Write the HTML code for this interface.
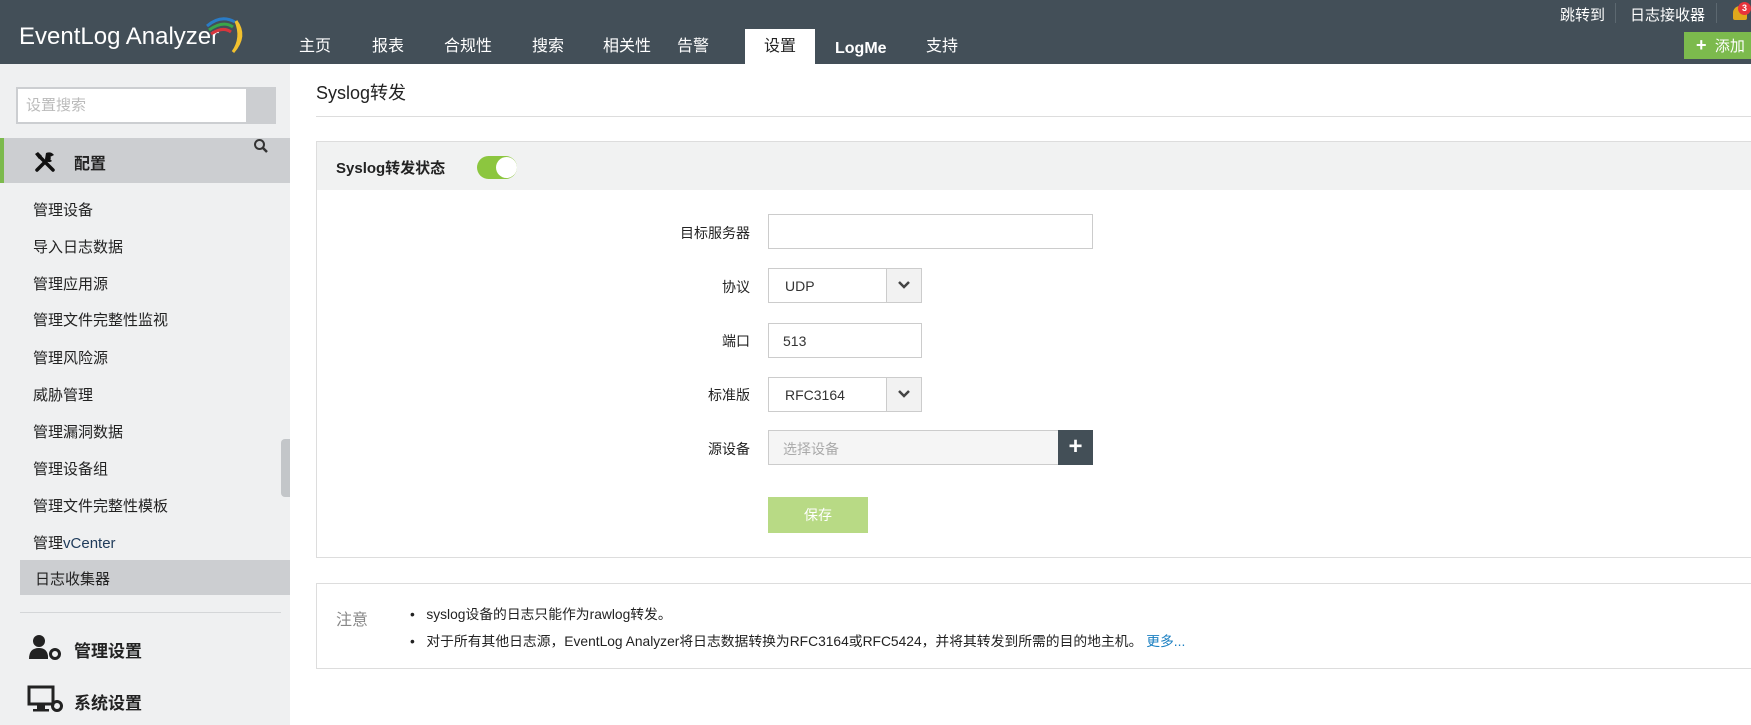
<!DOCTYPE html>
<html><head><meta charset="utf-8">
<style>
*{margin:0;padding:0;box-sizing:border-box}
body{width:1751px;height:725px;overflow:hidden;background:#fff;font-family:"Liberation Sans","Noto Sans CJK SC",sans-serif;color:#222;position:relative}
.a{position:absolute;white-space:nowrap}
#hd{left:0;top:0;width:1751px;height:64px;background:#434f58}
.nav{color:#fff;font-size:16px;top:36px;line-height:22px}
.sb{left:0;top:64px;width:290px;height:661px;background:#eff0f1}
.mi{font-size:15px;left:33px;color:#222}
.lbl{font-size:14px;right:1001px;text-align:right}
.inp{border:1px solid #ccc;background:#fff;font-size:14px;color:#333}
</style></head><body>
<div id="hd" class="a"></div>
<div class="a" style="left:19px;top:23px;color:#fff;font-size:24px;letter-spacing:0px">EventLog Analyzer</div>
<svg class="a" style="left:205px;top:12px" width="46" height="42" viewBox="0 0 46 42">
<path d="M2 14 Q16 2 30 10" stroke="#2a7cc7" stroke-width="3" fill="none"/>
<path d="M4 18 Q18 8 28 15" stroke="#3aa54a" stroke-width="3" fill="none"/>
<path d="M6 22 Q18 14 26 20" stroke="#d7363d" stroke-width="3" fill="none"/>
<path d="M31 9 Q42 24 28 40 Q38 26 31 9" stroke="#f2c12e" stroke-width="3" fill="#f2c12e"/>
</svg>
<div class="a" style="left:1560px;top:4px;color:#fff;font-size:15px">跳转到</div>
<div class="a" style="left:1615px;top:3px;width:1px;height:20px;background:#5c6870"></div>
<div class="a" style="left:1630px;top:4px;color:#fff;font-size:15px">日志接收器</div>
<div class="a" style="left:1716px;top:3px;width:1px;height:20px;background:#5c6870"></div>
<div class="a" style="left:1733px;top:6px;width:14px;height:14px;background:#e0a81c;border-radius:7px 7px 2px 2px"></div>
<div class="a" style="left:1738px;top:2px;width:13px;height:13px;background:#e8343c;border-radius:50%;color:#fff;font-size:9px;font-weight:bold;text-align:center;line-height:13px">3</div>
<div class="a" style="left:1684px;top:32px;width:67px;height:27px;background:#7cba4d;color:#fff;font-size:15px;line-height:27px;padding-left:12px"><b style="font-size:18px">+</b>&nbsp; 添加</div>
<div class="nav a" style="left:299px">主页</div>
<div class="nav a" style="left:372px">报表</div>
<div class="nav a" style="left:444px">合规性</div>
<div class="nav a" style="left:532px">搜索</div>
<div class="nav a" style="left:603px">相关性</div>
<div class="nav a" style="left:677px">告警</div>
<div class="a" style="left:745px;top:29px;width:70px;height:35px;background:#fff"></div>
<div class="nav a" style="left:764px;color:#222">设置</div>
<div class="nav a" style="left:835px;top:38px;font-weight:bold">LogMe</div>
<div class="nav a" style="left:926px">支持</div>

<div class="sb a"></div>
<div class="a" style="left:16px;top:87px;width:260px;height:37px;background:#ccced1"></div>
<div class="a" style="left:18px;top:89px;width:228px;height:33px;background:#fff;color:#bbb;font-size:15px;line-height:33px;padding-left:8px">设置搜索</div>
<div class="a" style="left:0;top:138px;width:290px;height:45px;background:#ccced1"></div>
<div class="a" style="left:0;top:138px;width:4px;height:45px;background:#7cba4d"></div>
<svg class="a" style="left:253px;top:138px" width="16" height="16" viewBox="0 0 16 16"><circle cx="6.5" cy="6.5" r="4.5" stroke="#333" stroke-width="2" fill="none"/><path d="M10 10l4 4" stroke="#333" stroke-width="2.5"/></svg>
<svg class="a" style="left:33px;top:150px" width="24" height="24" viewBox="0 0 24 24"><path d="M4 20L16 8" stroke="#111" stroke-width="3.5" stroke-linecap="round"/><path d="M13 3 Q18 1 21 5 L17 7 L17 9 L19 11 Q15 14 12 9Z" fill="#111"/><path d="M7 7L20 20" stroke="#111" stroke-width="3.5" stroke-linecap="round"/><path d="M2 4L5 2L9 6L6 9Z" fill="#111"/></svg>
<div class="a" style="left:74px;top:150px;font-size:16px;font-weight:bold">配置</div>
<div class="a mi" style="top:199px">管理设备</div>
<div class="a mi" style="top:236px">导入日志数据</div>
<div class="a mi" style="top:273px">管理应用源</div>
<div class="a mi" style="top:309px">管理文件完整性监视</div>
<div class="a mi" style="top:347px">管理风险源</div>
<div class="a mi" style="top:384px">威胁管理</div>
<div class="a mi" style="top:421px">管理漏洞数据</div>
<div class="a mi" style="top:458px">管理设备组</div>
<div class="a mi" style="top:495px">管理文件完整性模板</div>
<div class="a mi" style="top:532px">管理<span style="color:#1e3a5a">vCenter</span></div>
<div class="a" style="left:20px;top:560px;width:270px;height:35px;background:#ccced1"></div>
<div class="a mi" style="top:568px;left:35px">日志收集器</div>
<div class="a" style="left:20px;top:612px;width:261px;height:1px;background:#d4d6d8"></div>
<svg class="a" style="left:28px;top:634px" width="34" height="26" viewBox="0 0 34 26"><circle cx="11" cy="7" r="6" fill="#222"/><path d="M1 25 Q1 14 11 14 Q19 14 20 22 L20 25Z" fill="#222"/><circle cx="27" cy="20" r="4.5" stroke="#222" stroke-width="3" fill="none"/></svg>
<div class="a" style="left:74px;top:637px;font-size:17px;font-weight:bold">管理设置</div>
<svg class="a" style="left:27px;top:685px" width="36" height="28" viewBox="0 0 36 28"><rect x="2" y="2" width="24" height="17" stroke="#222" stroke-width="3" fill="none"/><rect x="10" y="20" width="8" height="4" fill="#222"/><rect x="6" y="24" width="16" height="2.5" fill="#222"/><circle cx="30" cy="21" r="4.5" stroke="#222" stroke-width="3" fill="none"/></svg>
<div class="a" style="left:74px;top:689px;font-size:17px;font-weight:bold">系统设置</div>
<div class="a" style="left:281px;top:439px;width:9px;height:58px;background:#c3c6c9;border-radius:4px 0 0 4px"></div>

<div class="a" style="left:316px;top:79px;font-size:18px;color:#222">Syslog转发</div>
<div class="a" style="left:316px;top:116px;width:1435px;height:1px;background:#ddd"></div>
<div class="a" style="left:316px;top:141px;width:1440px;height:417px;border:1px solid #ddd"></div>
<div class="a" style="left:317px;top:142px;width:1434px;height:48px;background:#f1f2f2"></div>
<div class="a" style="left:336px;top:157px;font-size:15px;font-weight:bold">Syslog转发状态</div>
<div class="a" style="left:477px;top:156px;width:40px;height:23px;background:#8cc63f;border-radius:12px"></div>
<div class="a" style="left:496px;top:157px;width:21px;height:21px;background:#fff;border-radius:50%"></div>

<div class="a lbl" style="top:223px">目标服务器</div>
<div class="a inp" style="left:768px;top:214px;width:325px;height:35px"></div>
<div class="a lbl" style="top:277px">协议</div>
<div class="a inp" style="left:768px;top:268px;width:154px;height:35px;padding:9px 0 0 16px">UDP</div>
<div class="a" style="left:886px;top:269px;width:35px;height:33px;background:#f2f2f2;border-left:1px solid #ccc"></div>
<svg class="a" style="left:897px;top:280px" width="14" height="10"><path d="M2 2l5 5 5-5" stroke="#444" stroke-width="2.5" fill="none"/></svg>
<div class="a lbl" style="top:331px">端口</div>
<div class="a inp" style="left:768px;top:323px;width:154px;height:35px;padding:9px 0 0 14px">513</div>
<div class="a lbl" style="top:385px">标准版</div>
<div class="a inp" style="left:768px;top:377px;width:154px;height:35px;padding:9px 0 0 16px">RFC3164</div>
<div class="a" style="left:886px;top:378px;width:35px;height:33px;background:#f2f2f2;border-left:1px solid #ccc"></div>
<svg class="a" style="left:897px;top:389px" width="14" height="10"><path d="M2 2l5 5 5-5" stroke="#444" stroke-width="2.5" fill="none"/></svg>
<div class="a lbl" style="top:439px">源设备</div>
<div class="a inp" style="left:768px;top:430px;width:325px;height:35px;background:#f5f5f5;color:#aaa;padding:8px 0 0 14px">选择设备</div>
<div class="a" style="left:1058px;top:430px;width:35px;height:35px;background:#434f57;color:#fff;font-size:24px;font-weight:bold;text-align:center;line-height:34px">+</div>
<div class="a" style="left:768px;top:497px;width:100px;height:36px;background:#b8da85;color:#fff;font-size:14px;text-align:center;line-height:36px">保存</div>

<div class="a" style="left:316px;top:583px;width:1440px;height:86px;border:1px solid #ddd"></div>
<div class="a" style="left:336px;top:606px;font-size:16px;color:#888">注意</div>
<div class="a" style="left:410px;top:603px;font-size:13.8px;color:#222">•&nbsp;&nbsp; syslog设备的日志只能作为rawlog转发。</div>
<div class="a" style="left:410px;top:630px;font-size:13.8px;color:#222">•&nbsp;&nbsp; 对于所有其他日志源，EventLog Analyzer将日志数据转换为RFC3164或RFC5424，并将其转发到所需的目的地主机。 <span style="color:#1a7fc1">更多...</span></div>
</body></html>
